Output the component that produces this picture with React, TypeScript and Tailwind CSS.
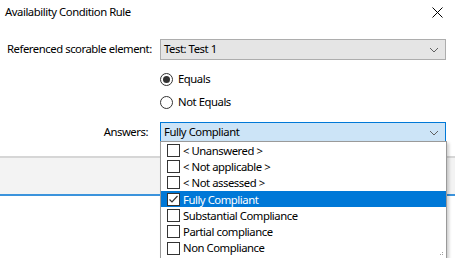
import { useState } from 'react';

const answers = [
  '< Unanswered >',
  '< Not applicable >',
  '< Not assessed >',
  'Fully Compliant',
  'Substantial Compliance',
  'Partial compliance',
  'Non Compliance',
];

function Chevron() {
  return (
    <svg width="10" height="6" viewBox="0 0 10 6" className="shrink-0">
      <path d="M1 1l4 4 4-4" fill="none" stroke="#606060" strokeWidth="1" />
    </svg>
  );
}

function Radio({ checked, label }: { checked: boolean; label: string }) {
  return (
    <div className="flex items-center h-[23px]">
      <span className="w-[13px] h-[13px] rounded-full border border-[#333333] bg-white flex items-center justify-center">
        {checked && <span className="w-[7px] h-[7px] rounded-full bg-[#333333]" />}
      </span>
      <span className="ml-[5px]">{label}</span>
    </div>
  );
}

function CheckBox({ checked }: { checked: boolean }) {
  return (
    <span className="w-[13px] h-[13px] border border-[#333333] bg-white flex items-center justify-center shrink-0">
      {checked && (
        <svg width="11" height="11" viewBox="0 0 11 11">
          <path d="M1.5 5.5l2.5 2.5 5.5-6" fill="none" stroke="#333333" strokeWidth="1.2" />
        </svg>
      )}
    </span>
  );
}

export default function App() {
  const [selected] = useState(3);

  return (
    <div
      className="relative w-[455px] h-[258px] overflow-hidden bg-white text-[11.3px] tracking-[-0.45px] text-black whitespace-nowrap"
      style={{ fontFamily: '"Segoe UI", "Noto Sans", sans-serif' }}
    >
      {/* Title bar */}
      <div className="flex items-center justify-between h-[24px] pl-[5px] pr-[12px]">
        <span>Availability Condition Rule</span>
        <svg width="11" height="11" viewBox="0 0 11 11">
          <path d="M0.5 0.5l10 10M10.5 0.5l-10 10" stroke="#000" strokeWidth="1" />
        </svg>
      </div>

      {/* Form */}
      <div className="grid grid-cols-[160px_286px] mt-[15px]">
        <div className="flex items-center pl-[7px] h-[21px]">Referenced scorable element:</div>
        <div className="flex items-center justify-between h-[21px] bg-[#e5e5e5] border border-[#adadad] pl-[3px] pr-[6px]">
          <span>Test: Test 1</span>
          <Chevron />
        </div>

        <div />
        <div className="pt-[8px]">
          <Radio checked label="Equals" />
          <Radio checked={false} label="Not Equals" />
        </div>

        <div className="flex items-center justify-end pr-[12px] h-[21px] mt-[8px]">Answers:</div>
        <div className="flex items-center justify-between h-[21px] mt-[8px] bg-[#cce4f7] border border-[#0078d7] pl-[3px] pr-[6px]">
          <span>{answers[selected]}</span>
          <Chevron />
        </div>
      </div>

      {/* Button band */}
      <div className="mt-[13px] h-[40px] bg-[#f3f3f3] border-t-2 border-[#d6d6d6] border-b-2 border-b-[#3b93dc]" />

      {/* Dropdown list */}
      <div className="absolute left-[160px] top-[141px] w-[287px] h-[120px] bg-white border border-[#9a9a9a] shadow-[2px_2px_3px_rgba(0,0,0,0.2)]">
        {answers.map((a, i) => (
          <div
            key={a}
            className={`flex items-center h-[16.33px] pl-[6px] ${i === selected ? 'bg-[#0078d7] text-white' : ''}`}
          >
            <CheckBox checked={i === selected} />
            <span className="ml-[3px] leading-none">{a}</span>
          </div>
        ))}
        <div className="absolute right-[3px] bottom-[5px] grid grid-cols-3 gap-[1px]">
          <span />
          <span />
          <span className="w-[1px] h-[1px] bg-[#a0a0a0]" />
          <span />
          <span className="w-[1px] h-[1px] bg-[#a0a0a0]" />
          <span className="w-[1px] h-[1px] bg-[#a0a0a0]" />
        </div>
      </div>
    </div>
  );
}
